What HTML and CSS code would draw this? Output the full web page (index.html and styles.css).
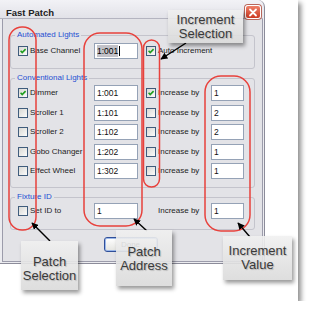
FILE: index.html
```html
<!DOCTYPE html>
<html>
<head>
<meta charset="utf-8">
<link rel="stylesheet" href="styles.css">
</head>
<body>
<div class="frame">
  <div class="dialog">
    <div class="titlebar">
      <span class="title">Fast Patch</span>
      <span class="close"><svg width="10" height="9" viewBox="0 0 10 9"><path d="M2 1.5 L8 7.5 M8 1.5 L2 7.5" stroke="#fff" stroke-width="1.8" stroke-linecap="round"/></svg></span>
    </div>
    <div class="dbody">
      <fieldset class="group g1">
        <legend>Automated Lights</legend>
        <div class="rows">
          <span class="cb"><svg viewBox="0 0 8 8"><polyline points="1.6,3.8 3.2,5.6 6.6,2.1" fill="none" stroke="#1e9e1e" stroke-width="1.6"/></svg></span>
          <span class="lbl">Base Channel</span>
          <span class="field f-addr"><span class="sel">1:001</span><span class="caret"></span></span>
          <span class="cb"><svg viewBox="0 0 8 8"><polyline points="1.6,3.8 3.2,5.6 6.6,2.1" fill="none" stroke="#1e9e1e" stroke-width="1.6"/></svg></span>
          <span class="lbl span2">Auto Increment</span>
        </div>
      </fieldset>
      <fieldset class="group g2">
        <legend>Conventional Lights</legend>
        <div class="rows">
          <span class="cb"><svg viewBox="0 0 8 8"><polyline points="1.6,3.8 3.2,5.6 6.6,2.1" fill="none" stroke="#1e9e1e" stroke-width="1.6"/></svg></span>
          <span class="lbl">Dimmer</span>
          <span class="field f-addr">1:001</span>
          <span class="cb"><svg viewBox="0 0 8 8"><polyline points="1.6,3.8 3.2,5.6 6.6,2.1" fill="none" stroke="#1e9e1e" stroke-width="1.6"/></svg></span>
          <span class="lbl">Increase by</span>
          <span class="field f-inc">1</span>

          <span class="cb"></span>
          <span class="lbl">Scroller 1</span>
          <span class="field f-addr">1:101</span>
          <span class="cb"></span>
          <span class="lbl">Increase by</span>
          <span class="field f-inc">2</span>

          <span class="cb"></span>
          <span class="lbl">Scroller 2</span>
          <span class="field f-addr">1:102</span>
          <span class="cb"></span>
          <span class="lbl">Increase by</span>
          <span class="field f-inc">2</span>

          <span class="cb"></span>
          <span class="lbl">Gobo Changer</span>
          <span class="field f-addr">1:202</span>
          <span class="cb"></span>
          <span class="lbl">Increase by</span>
          <span class="field f-inc">1</span>

          <span class="cb"></span>
          <span class="lbl">Effect Wheel</span>
          <span class="field f-addr">1:302</span>
          <span class="cb"></span>
          <span class="lbl">Increase by</span>
          <span class="field f-inc">1</span>
        </div>
      </fieldset>
      <fieldset class="group g3">
        <legend>Fixture ID</legend>
        <div class="rows">
          <span class="cb"></span>
          <span class="lbl">Set ID to</span>
          <span class="field f-addr">1</span>
          <span></span>
          <span class="lbl">Increase by</span>
          <span class="field f-inc">1</span>
        </div>
      </fieldset>
      <div class="actions"><span class="btn">Done</span></div>
    </div>
  </div>

  <svg class="overlay" width="298" height="301" viewBox="0 0 298 301">
    <defs>
      <marker id="ah" viewBox="0 0 10 10" refX="9" refY="5" markerWidth="5" markerHeight="5" orient="auto">
        <path d="M0 0 L10 5 L0 10 Z" fill="#000"/>
      </marker>
    </defs>
    <g fill="none" stroke="#e8413c" stroke-width="1.5">
      <rect x="9" y="27" width="27" height="203" rx="13"/>
      <rect x="84" y="33" width="58" height="193" rx="16"/>
      <rect x="143.5" y="40" width="16" height="147" rx="8"/>
      <rect x="205" y="76" width="45" height="155" rx="16"/>
    </g>
    <g stroke="#000" stroke-width="1.4" marker-end="url(#ah)">
      <line x1="186" y1="43" x2="161" y2="59"/>
      <line x1="50" y1="241" x2="32" y2="223"/>
      <line x1="147" y1="231" x2="134" y2="219"/>
      <line x1="250" y1="237" x2="238" y2="223"/>
    </g>
  </svg>

  <div class="callout c-incsel">Increment<br>Selection</div>
  <div class="callout c-patchsel">Patch<br>Selection</div>
  <div class="callout c-patchaddr">Patch<br>Address</div>
  <div class="callout c-incval">Increment<br>Value</div>
</div>
</body>
</html>
```

FILE: styles.css
```css
* { box-sizing: border-box; }
body {
  margin: 0;
  background: #fff;
  font-family: "Liberation Sans", Arial, sans-serif;
}
.frame {
  position: relative;
  width: 298px;
  height: 301px;
  background: #fff;
  box-shadow: 3px 3px 5px rgba(0,0,0,.45);
}
.dialog {
  width: 265px;
  background: #ececf0;
  border-right: 1px solid #8c8c9a;
  border-bottom: 1px solid #8c8c9a;
  border-top-right-radius: 7px;
  padding: 0 1px 1px 0;
}
.titlebar {
  display: flex;
  align-items: flex-start;
  height: 19px;
  background: linear-gradient(#f2f2f6, #e2e2e8);
  border-bottom: 1px solid #b4b4c0;
  border-top-right-radius: 6px;
}
.title {
  padding: 7px 0 0 6px;
  font-size: 9.5px;
  line-height: 11px;
  font-weight: bold;
  color: #222;
}
.close {
  margin: 5px 2px 0 auto;
  width: 16px;
  height: 14px;
  border: 1px solid #fff;
  border-radius: 3px;
  background: linear-gradient(#ee8068, #cc3a22);
  box-shadow: 0 0 0 1px #b8665a;
  display: flex;
  align-items: center;
  justify-content: center;
}
.dbody {
  margin-left: 2px;
  border: 1px solid #9c9cab;
  border-top: 0;
  background: #e3e3e7;
  padding: 11px 7px 9px;
}
.group {
  margin: 0;
  padding: 3px 0 9px 7px;
  border: 1px solid #c4c4cc;
  border-radius: 3px;
  min-inline-size: 0;
}
.group + .group { margin-top: 4px; }
.g2 { padding-top: 2px; padding-bottom: 8px; }
.g3 { padding-top: 1px; padding-bottom: 10px; }
.group legend {
  padding: 0 2px;
  margin-left: -3px;
  font-size: 8px;
  line-height: 10px;
  color: #1f4fd2;
}
.rows {
  display: grid;
  grid-template-columns: 12px 64px 52px 12px 53px 33px;
  grid-auto-rows: 16px;
  row-gap: 3.5px;
  align-items: center;
  font-size: 8px;
  color: #1c1c1c;
}
.lbl { line-height: 10px; white-space: nowrap; }
.span2 { grid-column: span 2; }
.cb {
  width: 10px;
  height: 10px;
  border: 1px solid #3f5c7c;
  background: linear-gradient(135deg, #d8d8d4, #fbfbfb);
  display: flex;
}
.cb svg { width: 8px; height: 8px; }
.field {
  height: 16px;
  border: 1px solid #95a2b6;
  background: #fff;
  font-size: 8.5px;
  line-height: 12px;
  padding-left: 2px;
  display: flex;
  align-items: center;
  color: #111;
}
.f-addr { width: 44px; }
.f-inc { width: 33px; }
.sel { background: #c2c2c8; color: #000; }
.caret { width: 1px; height: 10px; background: #000; margin-left: 1px; }
.actions {
  margin-top: 7px;
  display: flex;
  justify-content: center;
  padding-right: 4px;
}
.btn {
  width: 54px;
  height: 15px;
  border: 1px solid #2f4f9a;
  border-radius: 3px;
  background: linear-gradient(#ffffff, #e4e4e0);
  box-shadow: inset 0 0 0 1px #9cb8ea;
  font-size: 8px;
  line-height: 13px;
  text-align: center;
  color: #222;
}
.overlay {
  position: absolute;
  left: 0;
  top: 0;
  pointer-events: none;
}
.callout {
  position: absolute;
  background: linear-gradient(rgba(240,240,240,.9), rgba(218,218,218,.9));
  box-shadow: 2px 3px 4px rgba(0,0,0,.4);
  font-size: 13px;
  line-height: 14px;
  color: #3a3a3a;
  text-align: center;
  text-shadow: 1px 1px 1px rgba(0,0,0,.2);
}
.c-incsel { left: 168px; top: 10px; width: 75px; height: 33px; padding-top: 3px; }
.c-patchsel { left: 21px; top: 241px; width: 57px; height: 49px; padding-top: 14px; }
.c-patchaddr { left: 116px; top: 230px; width: 56px; height: 56px; padding-top: 15px; }
.c-incval { left: 223px; top: 236px; width: 69px; height: 44px; padding-top: 8px; }
```
